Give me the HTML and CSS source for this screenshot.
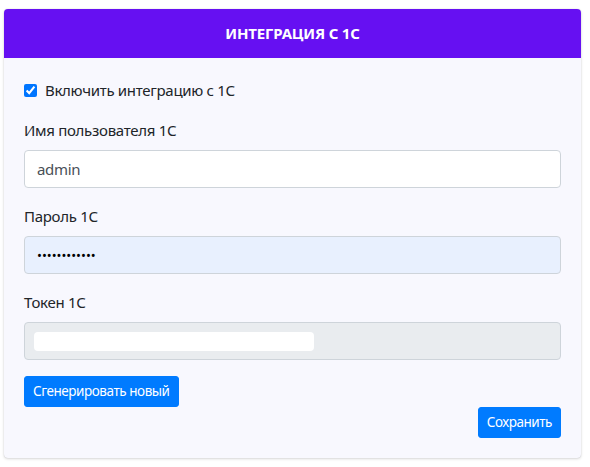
FILE: index.html
```html
<!DOCTYPE html>
<html lang="ru">
<head>
<meta charset="utf-8">
<link rel="stylesheet" href="styles.css">
</head>
<body>
<div class="page">
  <div class="card">
    <div class="card-header">Интеграция с 1С</div>
    <div class="card-body">
      <label class="check-row">
        <input type="checkbox" class="check" checked>
        <span>Включить интеграцию с 1С</span>
      </label>
      <div class="form-group">
        <div class="label">Имя пользователя 1С</div>
        <div class="input">admin</div>
      </div>
      <div class="form-group">
        <div class="label">Пароль 1С</div>
        <div class="input input-autofill"><span class="dots">••••••••••••</span></div>
      </div>
      <div class="form-group">
        <div class="label">Токен 1С</div>
        <div class="input input-readonly"><span class="token"></span></div>
      </div>
      <div class="btn-row">
        <button class="btn">Сгенерировать новый</button>
      </div>
      <div class="save-row">
        <button class="btn">Сохранить</button>
      </div>
    </div>
  </div>
</div>
</body>
</html>
```

FILE: styles.css
```css
* { box-sizing: border-box; }
html, body { margin: 0; padding: 0; background: #ffffff; }
body {
  font-family: "Noto Sans", "Liberation Sans", sans-serif;
  color: #212529;
  font-size: 15px;
  letter-spacing: -0.3px;
}
.page {
  padding: 9px 9px 9px 4px;
}
.card {
  width: 577px;
  background: #f8f8fe;
  border-radius: 4px;
  box-shadow: 0 0 1px rgba(0,0,0,0.2), 0 1px 3px rgba(0,0,0,0.15);
  overflow: hidden;
}
.card-header {
  background: #6610f2;
  color: #ffffff;
  font-weight: 700;
  text-transform: uppercase;
  text-align: center;
  height: 49px;
  line-height: 49px;
  font-size: 15px;
  letter-spacing: -0.2px;
}
.card-body {
  padding: 20px 20px 20px 20px;
}
.check-row {
  display: flex;
  align-items: center;
  height: 24px;
  gap: 8px;
  margin-bottom: 16px;
}
.check {
  margin: 0;
  width: 13px;
  height: 13px;
  accent-color: #0075ff;
}
.form-group { margin-bottom: 16px; }
.label {
  height: 24px;
  line-height: 24px;
  margin-bottom: 8px;
}
.input {
  height: 38px;
  width: 537px;
  border: 1px solid #ced4da;
  border-radius: 4px;
  background: #ffffff;
  padding: 0 12px;
  display: flex;
  align-items: center;
  color: #495057;
}
.input-autofill { background: #e8f0fe; }
.dots { color: #000; font-size: 13px; letter-spacing: 0; }
.input-readonly { background: #e9ecef; padding: 0 9px; }
.token {
  display: block;
  width: 280px;
  height: 19px;
  background: #ffffff;
  border-radius: 4px;
}
.btn-row { display: flex; }
.btn {
  font-family: inherit;
  background: #007bff;
  color: #ffffff;
  border: 1px solid #007bff;
  border-radius: 3px;
  font-size: 13.5px;
  letter-spacing: -0.45px;
  height: 31px;
  padding: 0 8px;
  line-height: 1;
}
.save-row {
  display: flex;
  justify-content: flex-end;
}
```
